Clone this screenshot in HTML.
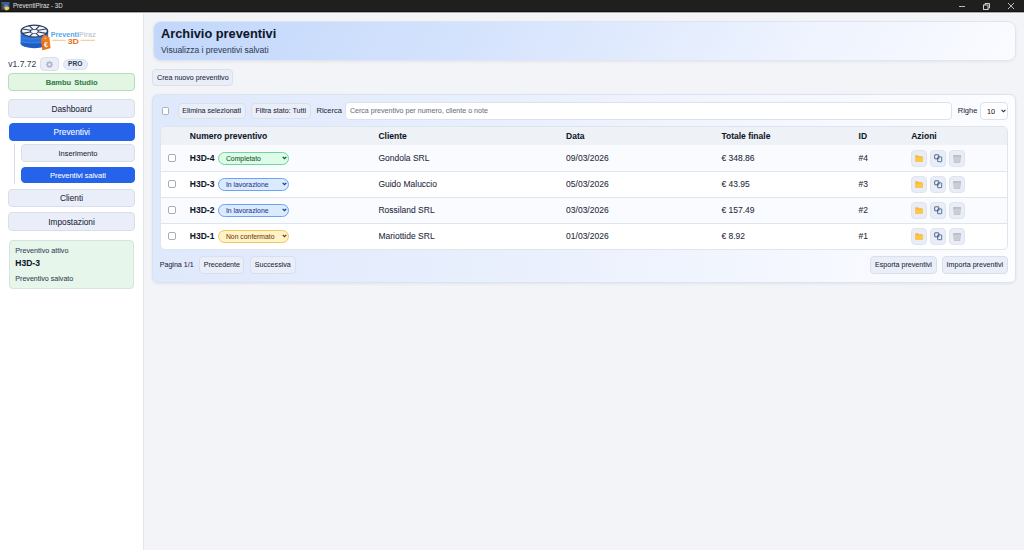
<!DOCTYPE html>
<html><head><meta charset="utf-8">
<style>
*{box-sizing:border-box;margin:0;padding:0}
html,body{width:1024px;height:550px;overflow:hidden;background:#f2f4f8;font-family:"Liberation Sans",sans-serif;color:#1e293b}
.a{position:absolute}
.c{display:flex;align-items:center;justify-content:center;white-space:nowrap}
#tb{left:0;top:0;width:1024px;height:11px;background:#1f1f1f}
#sb{left:0;top:11px;width:144px;height:539px;background:#fff;border-right:1px solid #e1e6ed}
.btn{background:#e9eef8;border:1px solid #d9e0ea;border-radius:4px;color:#1e293b}
.nav{background:#e9eef8;border:1px solid #d9dfea;border-radius:4px;color:#1e293b;font-size:8.3px}
.pri{background:#2563eb;border:1px solid #2563eb;border-radius:4px;color:#fff}
.t{white-space:nowrap;line-height:1;-webkit-text-stroke:0.06px currentColor}
.c{-webkit-text-stroke:0.06px currentColor}
</style></head><body>
<!-- title bar -->
<div id="tb" class="a"></div>
<svg class="a" style="left:1px;top:1.5px" width="10" height="9" viewBox="0 0 10 9"><rect x="0.5" y="0.3" width="8" height="7.5" fill="#4b4b4f"/><rect x="0.5" y="0.3" width="8" height="1.2" fill="#3d6fc0"/><circle cx="5.2" cy="4.6" r="2.6" fill="#3f7cc8"/><path d="M3.6 5.2 Q5.5 3.6 8.6 5.8 Q7.8 8.6 5 8.4 Q3.2 7.4 3.6 5.2 Z" fill="#f1cf4b"/></svg>
<div class="a t" style="left:12.6px;top:2.8px;font-size:6.8px;color:#dcdcdc;transform:scaleX(0.9);transform-origin:0 0">PreventiPiraz - 3D</div>
<div class="a" style="left:959px;top:6px;width:6px;height:1px;background:#bdbdbd"></div>
<svg class="a" style="left:982px;top:2px" width="9" height="9" viewBox="0 0 9 9"><rect x="1.5" y="3" width="4.5" height="4.5" fill="none" stroke="#cfcfcf" stroke-width="1"/><path d="M3 3 V1.5 H7.5 V6 H6" fill="none" stroke="#cfcfcf" stroke-width="1"/></svg>
<svg class="a" style="left:1007px;top:2px" width="8" height="8" viewBox="0 0 8 8"><path d="M1 1 L7 7 M7 1 L1 7" stroke="#d0d0d0" stroke-width="0.9"/></svg>

<!-- sidebar -->
<div id="sb" class="a"></div>
<!-- logo -->
<svg class="a" style="left:18px;top:22px" width="82" height="32" viewBox="0 0 82 32">
  <ellipse cx="16.4" cy="21.3" rx="13.8" ry="5" fill="#1f5cc0"/>
  <rect x="2.6" y="9" width="27.6" height="12.3" fill="#2a6fd6"/>
  <path d="M3 12 Q10 14 16 13 M4 16 Q12 18 22 16 M3.5 19.5 Q12 22 26 20" stroke="#3f8ae8" stroke-width="0.8" fill="none"/>
  <ellipse cx="16.4" cy="9" rx="13.9" ry="6.4" fill="#2b3a5c"/>
  <ellipse cx="16.4" cy="9.1" rx="12.4" ry="5.3" fill="#f4f6fa"/>
  <path d="M20.37 10.08 L28.04 11.34 M18.05 11.32 L21.22 14.37 M14.75 11.32 L11.58 14.37 M12.43 10.08 L4.76 11.34 M12.43 8.32 L4.76 7.06 M14.75 7.08 L11.58 4.03 M18.05 7.08 L21.22 4.03 M20.37 8.32 L28.04 7.06 " stroke="#2b3a5c" stroke-width="1.1"/>
  <ellipse cx="16.4" cy="9.3" rx="4.6" ry="2.4" fill="#2b3a5c"/>
  <ellipse cx="16.4" cy="9.4" rx="3.4" ry="1.6" fill="#f4f6fa"/>
  <path d="M26 12.3 L31.5 15.5 L32.5 26 L24.5 28.3 L22.8 17.5 Z" fill="#f07a1e"/>
  <path d="M22.8 17.5 L24.5 28.3 L32.5 26 L28 22 Z" fill="#e4641a" opacity="0.6"/>
  <circle cx="27.3" cy="16.4" r="0.8" fill="#fbd7b8"/>
  <text x="27.8" y="25.2" font-family="Liberation Sans" font-size="7" font-weight="bold" fill="#fff" text-anchor="middle" transform="rotate(-10 27.8 22)">€</text>
  <text x="32.7" y="15" font-family="Liberation Sans" font-size="7.5" font-weight="bold" fill="#57a6ec" textLength="28.2" lengthAdjust="spacingAndGlyphs">Preventi</text>
  <text x="60.9" y="15" font-family="Liberation Sans" font-size="7.5" font-weight="bold" fill="#c9ced6" textLength="17" lengthAdjust="spacingAndGlyphs">Piraz</text>
  <path d="M34.4 18.3 H47.6 M62.6 18.3 H76.7" stroke="#f3a847" stroke-width="0.7"/>
  <text x="49.7" y="22.2" font-family="Liberation Sans" font-size="7.7" font-weight="bold" fill="#ec7014" textLength="11.2" lengthAdjust="spacingAndGlyphs">3D</text>
</svg>
<div class="a t" style="left:8.3px;top:59.5px;font-size:8.5px;color:#334155">v1.7.72</div>
<div class="a btn" style="left:40.1px;top:57.1px;width:18.6px;height:13.6px;border-radius:4px"></div>
<svg class="a" style="left:44.9px;top:60.2px" width="9" height="9" viewBox="0 0 9 9"><path d="M8.10 4.50 L6.90 5.49 L7.05 7.05 L5.49 6.90 L4.50 8.10 L3.51 6.90 L1.95 7.05 L2.10 5.49 L0.90 4.50 L2.10 3.51 L1.95 1.95 L3.51 2.10 L4.50 0.90 L5.49 2.10 L7.05 1.95 L6.90 3.51 Z" fill="#b2b6c3" stroke="#b2b6c3" stroke-width="0.3" stroke-linejoin="round"/><circle cx="4.5" cy="4.5" r="1.3" fill="#e9edf5"/></svg>
<div class="a" style="left:63.2px;top:58.5px;width:24.4px;height:11.4px;border-radius:6px;background:#e7eefb;border:1px solid #d9e1ee"></div>
<div class="a t" style="left:68px;top:61.1px;font-size:6.6px;font-weight:bold;color:#334155;letter-spacing:0.1px">PRO</div>
<div class="a c" style="left:8.2px;top:73.3px;width:127px;height:17.4px;padding-top:1px;border-radius:4px;background:#e3f5e3;border:1px solid #b0e0b3;font-size:7.5px;font-weight:bold;color:#2f7d46;word-spacing:1px">Bambu Studio</div>
<div class="a nav c" style="left:8.2px;top:99.2px;width:127px;height:19px">Dashboard</div>
<div class="a pri c" style="left:9px;top:123px;width:125.5px;height:18.3px;font-size:8.3px">Preventivi</div>
<div class="a" style="left:14.2px;top:144.3px;width:1.3px;height:39.7px;background:#d9dfea"></div>
<div class="a nav c" style="left:21.1px;top:144.3px;width:113.7px;height:18.2px;font-size:7.47px">Inserimento</div>
<div class="a pri c" style="left:21.1px;top:166.8px;width:113.7px;height:16.7px;font-size:7.47px">Preventivi salvati</div>
<div class="a nav c" style="left:8.3px;top:188.7px;width:126.5px;height:18.7px">Clienti</div>
<div class="a nav c" style="left:8.3px;top:212.2px;width:126.5px;height:18.9px">Impostazioni</div>
<div class="a" style="left:8.8px;top:239.8px;width:125.7px;height:48.8px;border-radius:4px;background:#e6f6ea;border:1px solid #d6e3df"></div>
<div class="a t" style="left:15.3px;top:247px;font-size:7.2px;color:#334155">Preventivo attivo</div>
<div class="a t" style="left:15.3px;top:258.8px;font-size:8.5px;font-weight:bold;color:#0f172a">H3D-3</div>
<div class="a t" style="left:15.3px;top:275.8px;font-size:7.1px;color:#334155">Preventivo salvato</div>

<div class="a" style="left:0;top:11px;width:1024px;height:1px;background:#131313"></div>
<div class="a" style="left:0;top:12px;width:1024px;height:1px;background:#a9aaac"></div>
<div class="a" style="left:0;top:13px;width:1024px;height:1px;background:rgba(255,255,255,0.35)"></div>
<!-- main header -->
<div class="a" style="left:153px;top:21px;width:862.5px;height:40px;box-shadow:0 1px 3px rgba(15,23,42,0.06);border-radius:8px;background:linear-gradient(120deg,#c2d7fb 0%,#d6e4fd 40%,#eef3fe 75%,#fafbff 100%);border:1px solid #dfe6f2"></div>
<div class="a t" style="left:161px;top:28px;font-size:12.8px;font-weight:bold;color:#0f172a">Archivio preventivi</div>
<div class="a t" style="left:161px;top:45.7px;font-size:8.5px;color:#334155">Visualizza i preventivi salvati</div>
<div class="a btn c" style="left:152.2px;top:68.8px;width:81.3px;height:17.6px;padding-top:0.6px;font-size:7.11px">Crea nuovo preventivo</div>

<!-- panel -->
<div class="a" style="left:152.3px;top:94.4px;width:863.6px;height:188.2px;border-radius:6px;background:linear-gradient(90deg,#dfe9fc 0%,#eaf0fd 45%,#f8faff 85%,#fcfdff 100%);border:1px solid #dbe3f0;box-shadow:0 1px 3px rgba(15,23,42,0.07)"></div>
<div class="a" style="left:162px;top:107px;width:7px;height:7.8px;border:1px solid #a9adb5;border-radius:1.5px;background:#fff"></div>
<div class="a btn c" style="left:177.6px;top:102.6px;width:68.2px;height:16.8px;padding-top:0.8px;font-size:7.11px">Elimina selezionati</div>
<div class="a btn c" style="left:251px;top:102.6px;width:59.5px;height:16.8px;padding-top:0.8px;font-size:7.11px">Filtra stato: Tutti</div>
<div class="a t" style="left:316.5px;top:106.5px;font-size:7.47px;color:#1e293b">Ricerca</div>
<div class="a" style="left:345.3px;top:102.4px;width:606.5px;height:17.3px;border-radius:4px;background:#fff;border:1px solid #dbe2ee"></div>
<div class="a t" style="left:349.9px;top:108.2px;font-size:7.1px;color:#6b7280">Cerca preventivo per numero, cliente o note</div>
<div class="a t" style="left:957.8px;top:106.5px;font-size:7.47px;color:#1e293b">Righe</div>
<div class="a" style="left:980.2px;top:102.4px;width:27.5px;height:18px;border-radius:4px;background:#fff;border:1px solid #dbe2ee"></div>
<div class="a t" style="left:987px;top:108px;font-size:7.3px;color:#1e293b">10</div>
<svg class="a" style="left:1000.5px;top:109px" width="5" height="4" viewBox="0 0 5 4"><path d="M0.6 0.8 L2.5 2.8 L4.4 0.8" fill="none" stroke="#1e293b" stroke-width="1.1"/></svg>

<!-- table -->
<div class="a" style="left:160.2px;top:126px;width:847.8px;height:124px;border-radius:5px;background:#fff;border:1px solid #dfe5ee;overflow:hidden">
  <div class="a" style="left:0;top:0;width:100%;height:18px;background:#eef1f6"></div>
  <div class="a" style="left:0;top:18px;width:100%;height:27px;background:#f9fbfe;border-bottom:1px solid #dfe5ee"></div>
  <div class="a" style="left:0;top:45px;width:100%;height:26px;background:#fff;border-bottom:1px solid #dfe5ee"></div>
  <div class="a" style="left:0;top:71px;width:100%;height:26px;background:#f9fbfe;border-bottom:1px solid #dfe5ee"></div>
</div>
<div class="a t" style="left:189.80px;top:131.80px;font-size:8.5px;font-weight:bold;color:#0f172a">Numero preventivo</div>
<div class="a t" style="left:378.40px;top:131.80px;font-size:8.5px;font-weight:bold;color:#0f172a">Cliente</div>
<div class="a t" style="left:566.10px;top:131.80px;font-size:8.5px;font-weight:bold;color:#0f172a">Data</div>
<div class="a t" style="left:721.40px;top:131.80px;font-size:8.5px;font-weight:bold;color:#0f172a">Totale finale</div>
<div class="a t" style="left:858.60px;top:131.80px;font-size:8.5px;font-weight:bold;color:#0f172a">ID</div>
<div class="a t" style="left:911.20px;top:131.80px;font-size:8.5px;font-weight:bold;color:#0f172a">Azioni</div>
<div class="a" style="left:168px;top:154.00px;width:8px;height:8px;border:1px solid #a9adb5;border-radius:2px;background:#fff"></div>
<div class="a t" style="left:189.80px;top:153.50px;font-size:8.5px;font-weight:bold;color:#0f172a">H3D-4</div>
<div class="a" style="left:218.1px;top:151.50px;width:71.1px;height:13px;border-radius:7px;background:#dcfce7;border:1px solid #72d49b"></div>
<div class="a t" style="left:225.90px;top:155.50px;font-size:6.85px;color:#14532d;-webkit-text-stroke:0.06px #14532d">Completato</div>
<svg class="a" style="left:281.5px;top:155.80px" width="5" height="4" viewBox="0 0 5 4"><path d="M0.7 0.9 L2.5 2.7 L4.3 0.9" fill="none" stroke="#14532d" stroke-width="1.3"/></svg>
<div class="a t" style="left:378.40px;top:153.50px;font-size:8.5px;color:#1e293b">Gondola SRL</div>
<div class="a t" style="left:566.10px;top:153.50px;font-size:8.5px;color:#1e293b">09/03/2026</div>
<div class="a t" style="left:721.40px;top:153.50px;font-size:8.5px;color:#1e293b">€ 348.86</div>
<div class="a t" style="left:858.60px;top:153.50px;font-size:8.5px;color:#1e293b">#4</div>
<div class="a" style="left:911.2px;top:150.30px;width:15.6px;height:16.3px;border-radius:4px;background:#e8edf7;border:1px solid #dfe5ef"></div>
<div class="a" style="left:930.3px;top:150.30px;width:15.6px;height:16.3px;border-radius:4px;background:#e8edf7;border:1px solid #dfe5ef"></div>
<div class="a" style="left:949.3px;top:150.30px;width:15.6px;height:16.3px;border-radius:4px;background:#e8edf7;border:1px solid #dfe5ef"></div>
<svg class="a" style="left:915px;top:155.40px" width="8.6" height="7" viewBox="0 0 8.6 7"><path d="M0.3 0.3 H3 L3.8 1.2 H7.5 V6.8 H0.3 Z" fill="#f7b733"/><path d="M1 2.4 H8.4 L7.6 6.8 H0.3 Z" fill="#fdc84a"/></svg>
<svg class="a" style="left:933.8px;top:153.70px" width="9" height="9" viewBox="0 0 9 9"><rect x="0.7" y="0.8" width="4.1" height="4" rx="0.4" fill="#eaf3ff" stroke="#363f50" stroke-width="0.8"/><rect x="3.6" y="2.9" width="4.1" height="4.8" rx="0.4" fill="none" stroke="#2f5591" stroke-width="0.8"/></svg>
<svg class="a" style="left:952.8px;top:154.70px" width="8.2" height="8" viewBox="0 0 8.2 8"><path d="M0.6 0.8 H7.6 L6.8 7.6 H1.4 Z" fill="#d3d5db" stroke="#abaeb7" stroke-width="0.6"/><path d="M0.3 0.4 H7.9 V1.4 H0.3 Z" fill="#aeb1ba"/><path d="M2.7 2.2 L2.9 6.8 M4.1 2.2 V6.8 M5.5 2.2 L5.3 6.8" stroke="#b8bbc3" stroke-width="0.45"/></svg>
<div class="a" style="left:168px;top:180.00px;width:8px;height:8px;border:1px solid #a9adb5;border-radius:2px;background:#fff"></div>
<div class="a t" style="left:189.80px;top:179.50px;font-size:8.5px;font-weight:bold;color:#0f172a">H3D-3</div>
<div class="a" style="left:218.1px;top:177.50px;width:71.1px;height:13px;border-radius:7px;background:#dbeafe;border:1px solid #6aa5f5"></div>
<div class="a t" style="left:225.90px;top:181.50px;font-size:6.85px;color:#1e3a8a;-webkit-text-stroke:0.06px #1e3a8a">In lavorazione</div>
<svg class="a" style="left:281.5px;top:181.80px" width="5" height="4" viewBox="0 0 5 4"><path d="M0.7 0.9 L2.5 2.7 L4.3 0.9" fill="none" stroke="#1e3a8a" stroke-width="1.3"/></svg>
<div class="a t" style="left:378.40px;top:179.50px;font-size:8.5px;color:#1e293b">Guido Maluccio</div>
<div class="a t" style="left:566.10px;top:179.50px;font-size:8.5px;color:#1e293b">05/03/2026</div>
<div class="a t" style="left:721.40px;top:179.50px;font-size:8.5px;color:#1e293b">€ 43.95</div>
<div class="a t" style="left:858.60px;top:179.50px;font-size:8.5px;color:#1e293b">#3</div>
<div class="a" style="left:911.2px;top:176.30px;width:15.6px;height:16.3px;border-radius:4px;background:#e8edf7;border:1px solid #dfe5ef"></div>
<div class="a" style="left:930.3px;top:176.30px;width:15.6px;height:16.3px;border-radius:4px;background:#e8edf7;border:1px solid #dfe5ef"></div>
<div class="a" style="left:949.3px;top:176.30px;width:15.6px;height:16.3px;border-radius:4px;background:#e8edf7;border:1px solid #dfe5ef"></div>
<svg class="a" style="left:915px;top:181.40px" width="8.6" height="7" viewBox="0 0 8.6 7"><path d="M0.3 0.3 H3 L3.8 1.2 H7.5 V6.8 H0.3 Z" fill="#f7b733"/><path d="M1 2.4 H8.4 L7.6 6.8 H0.3 Z" fill="#fdc84a"/></svg>
<svg class="a" style="left:933.8px;top:179.70px" width="9" height="9" viewBox="0 0 9 9"><rect x="0.7" y="0.8" width="4.1" height="4" rx="0.4" fill="#eaf3ff" stroke="#363f50" stroke-width="0.8"/><rect x="3.6" y="2.9" width="4.1" height="4.8" rx="0.4" fill="none" stroke="#2f5591" stroke-width="0.8"/></svg>
<svg class="a" style="left:952.8px;top:180.70px" width="8.2" height="8" viewBox="0 0 8.2 8"><path d="M0.6 0.8 H7.6 L6.8 7.6 H1.4 Z" fill="#d3d5db" stroke="#abaeb7" stroke-width="0.6"/><path d="M0.3 0.4 H7.9 V1.4 H0.3 Z" fill="#aeb1ba"/><path d="M2.7 2.2 L2.9 6.8 M4.1 2.2 V6.8 M5.5 2.2 L5.3 6.8" stroke="#b8bbc3" stroke-width="0.45"/></svg>
<div class="a" style="left:168px;top:206.00px;width:8px;height:8px;border:1px solid #a9adb5;border-radius:2px;background:#fff"></div>
<div class="a t" style="left:189.80px;top:205.50px;font-size:8.5px;font-weight:bold;color:#0f172a">H3D-2</div>
<div class="a" style="left:218.1px;top:203.50px;width:71.1px;height:13px;border-radius:7px;background:#dbeafe;border:1px solid #6aa5f5"></div>
<div class="a t" style="left:225.90px;top:207.50px;font-size:6.85px;color:#1e3a8a;-webkit-text-stroke:0.06px #1e3a8a">In lavorazione</div>
<svg class="a" style="left:281.5px;top:207.80px" width="5" height="4" viewBox="0 0 5 4"><path d="M0.7 0.9 L2.5 2.7 L4.3 0.9" fill="none" stroke="#1e3a8a" stroke-width="1.3"/></svg>
<div class="a t" style="left:378.40px;top:205.50px;font-size:8.5px;color:#1e293b">Rossiland SRL</div>
<div class="a t" style="left:566.10px;top:205.50px;font-size:8.5px;color:#1e293b">03/03/2026</div>
<div class="a t" style="left:721.40px;top:205.50px;font-size:8.5px;color:#1e293b">€ 157.49</div>
<div class="a t" style="left:858.60px;top:205.50px;font-size:8.5px;color:#1e293b">#2</div>
<div class="a" style="left:911.2px;top:202.30px;width:15.6px;height:16.3px;border-radius:4px;background:#e8edf7;border:1px solid #dfe5ef"></div>
<div class="a" style="left:930.3px;top:202.30px;width:15.6px;height:16.3px;border-radius:4px;background:#e8edf7;border:1px solid #dfe5ef"></div>
<div class="a" style="left:949.3px;top:202.30px;width:15.6px;height:16.3px;border-radius:4px;background:#e8edf7;border:1px solid #dfe5ef"></div>
<svg class="a" style="left:915px;top:207.40px" width="8.6" height="7" viewBox="0 0 8.6 7"><path d="M0.3 0.3 H3 L3.8 1.2 H7.5 V6.8 H0.3 Z" fill="#f7b733"/><path d="M1 2.4 H8.4 L7.6 6.8 H0.3 Z" fill="#fdc84a"/></svg>
<svg class="a" style="left:933.8px;top:205.70px" width="9" height="9" viewBox="0 0 9 9"><rect x="0.7" y="0.8" width="4.1" height="4" rx="0.4" fill="#eaf3ff" stroke="#363f50" stroke-width="0.8"/><rect x="3.6" y="2.9" width="4.1" height="4.8" rx="0.4" fill="none" stroke="#2f5591" stroke-width="0.8"/></svg>
<svg class="a" style="left:952.8px;top:206.70px" width="8.2" height="8" viewBox="0 0 8.2 8"><path d="M0.6 0.8 H7.6 L6.8 7.6 H1.4 Z" fill="#d3d5db" stroke="#abaeb7" stroke-width="0.6"/><path d="M0.3 0.4 H7.9 V1.4 H0.3 Z" fill="#aeb1ba"/><path d="M2.7 2.2 L2.9 6.8 M4.1 2.2 V6.8 M5.5 2.2 L5.3 6.8" stroke="#b8bbc3" stroke-width="0.45"/></svg>
<div class="a" style="left:168px;top:232.00px;width:8px;height:8px;border:1px solid #a9adb5;border-radius:2px;background:#fff"></div>
<div class="a t" style="left:189.80px;top:231.50px;font-size:8.5px;font-weight:bold;color:#0f172a">H3D-1</div>
<div class="a" style="left:218.1px;top:229.50px;width:71.1px;height:13px;border-radius:7px;background:#fef3c7;border:1px solid #f3c660"></div>
<div class="a t" style="left:225.90px;top:233.50px;font-size:6.85px;color:#7c3a10;-webkit-text-stroke:0.06px #7c3a10">Non confermato</div>
<svg class="a" style="left:281.5px;top:233.80px" width="5" height="4" viewBox="0 0 5 4"><path d="M0.7 0.9 L2.5 2.7 L4.3 0.9" fill="none" stroke="#7c3a10" stroke-width="1.3"/></svg>
<div class="a t" style="left:378.40px;top:231.50px;font-size:8.5px;color:#1e293b">Mariottide SRL</div>
<div class="a t" style="left:566.10px;top:231.50px;font-size:8.5px;color:#1e293b">01/03/2026</div>
<div class="a t" style="left:721.40px;top:231.50px;font-size:8.5px;color:#1e293b">€ 8.92</div>
<div class="a t" style="left:858.60px;top:231.50px;font-size:8.5px;color:#1e293b">#1</div>
<div class="a" style="left:911.2px;top:228.30px;width:15.6px;height:16.3px;border-radius:4px;background:#e8edf7;border:1px solid #dfe5ef"></div>
<div class="a" style="left:930.3px;top:228.30px;width:15.6px;height:16.3px;border-radius:4px;background:#e8edf7;border:1px solid #dfe5ef"></div>
<div class="a" style="left:949.3px;top:228.30px;width:15.6px;height:16.3px;border-radius:4px;background:#e8edf7;border:1px solid #dfe5ef"></div>
<svg class="a" style="left:915px;top:233.40px" width="8.6" height="7" viewBox="0 0 8.6 7"><path d="M0.3 0.3 H3 L3.8 1.2 H7.5 V6.8 H0.3 Z" fill="#f7b733"/><path d="M1 2.4 H8.4 L7.6 6.8 H0.3 Z" fill="#fdc84a"/></svg>
<svg class="a" style="left:933.8px;top:231.70px" width="9" height="9" viewBox="0 0 9 9"><rect x="0.7" y="0.8" width="4.1" height="4" rx="0.4" fill="#eaf3ff" stroke="#363f50" stroke-width="0.8"/><rect x="3.6" y="2.9" width="4.1" height="4.8" rx="0.4" fill="none" stroke="#2f5591" stroke-width="0.8"/></svg>
<svg class="a" style="left:952.8px;top:232.70px" width="8.2" height="8" viewBox="0 0 8.2 8"><path d="M0.6 0.8 H7.6 L6.8 7.6 H1.4 Z" fill="#d3d5db" stroke="#abaeb7" stroke-width="0.6"/><path d="M0.3 0.4 H7.9 V1.4 H0.3 Z" fill="#aeb1ba"/><path d="M2.7 2.2 L2.9 6.8 M4.1 2.2 V6.8 M5.5 2.2 L5.3 6.8" stroke="#b8bbc3" stroke-width="0.45"/></svg>
<div class="a t" style="left:159.70px;top:261.98px;font-size:7.11px;color:#1e293b">Pagina 1/1</div>
<div class="a btn c" style="left:199.2px;top:256.1px;width:45.3px;height:17.5px;font-size:7.11px">Precedente</div>
<div class="a btn c" style="left:250px;top:256.1px;width:45.6px;height:17.5px;font-size:7.11px">Successiva</div>
<div class="a btn c" style="left:870.4px;top:256px;width:66.2px;height:17.6px;font-size:7.11px">Esporta preventivi</div>
<div class="a btn c" style="left:942px;top:256px;width:65.7px;height:17.6px;font-size:7.11px">Importa preventivi</div>

</body></html>
